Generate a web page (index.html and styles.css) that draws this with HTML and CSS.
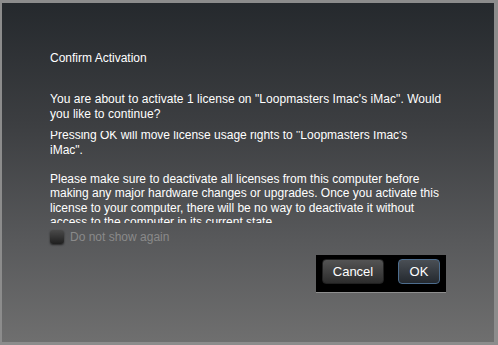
FILE: index.html
```html
<!DOCTYPE html>
<html lang="en">
<head>
    <meta charset="UTF-8">
    <title>Confirm Activation</title>
    <link rel="stylesheet" href="styles.css">
</head>
<body>
    <div class="dialog">
        <h1 class="dialog__title">Confirm Activation</h1>
        <p class="dialog__message">You are about to activate 1 license on "Loopmasters Imac's iMac". Would you like to continue?</p>
        <div class="dialog__details">
            <div class="dialog__details-inner">
                <p>Pressing OK will move license usage rights to "Loopmasters Imac's iMac".</p>
                <p>Please make sure to deactivate all licenses from this computer before making any major hardware changes or upgrades. Once you activate this license to your computer, there will be no way to deactivate it without access to the computer in its current state.</p>
            </div>
        </div>
        <label class="dont-show">
            <span class="dont-show__box"></span>
            <span class="dont-show__label">Do not show again</span>
        </label>
        <div class="button-bar">
            <button class="button button--cancel">Cancel</button>
            <button class="button button--ok">OK</button>
        </div>
    </div>
</body>
</html>
```

FILE: styles.css
```css
html, body {
    margin: 0;
    padding: 0;
}
body {
    background-color: #8c8c8c;
    font-family: "Liberation Sans", Arial, sans-serif;
    font-size: 12px;
    color: #ffffff;
    height: 345px;
    overflow: hidden;
}
.dialog {
    margin: 3px 4px 0 2px;
    height: 339px;
    box-sizing: border-box;
    padding: 0 34px 0 48px;
    background: linear-gradient(to bottom, #25292d 0%, #3c3e41 35%, #58595b 70%, #6f6f6f 100%);
    display: flex;
    flex-direction: column;
}
.dialog__title {
    margin: 47px 0 0 0;
    font-size: 12px;
    font-weight: normal;
    line-height: 16px;
}
.dialog__message {
    margin: 26px 0 0 0;
    line-height: 15px;
    width: 392px;
    letter-spacing: 0.05px;
}
.dialog__details {
    margin-top: 9px;
    height: 92px;
    width: 390px;
    overflow: hidden;
}
.dialog__details-inner {
    margin-top: -3px;
}
.dialog__details-inner p {
    margin: 0 0 14.5px 0;
    line-height: 14.5px;
}
.dont-show {
    display: flex;
    align-items: center;
    gap: 6px;
    margin-top: 6px;
    height: 16px;
}
.dont-show__box {
    width: 14px;
    height: 14px;
    box-sizing: border-box;
    border-radius: 3px;
    background: linear-gradient(to bottom, #4a4a4a, #1f1f1f);
    box-shadow: 0 1px 2px rgba(0, 0, 0, 0.6);
}
.dont-show__label {
    color: #8a8a8a;
}
.button-bar {
    align-self: flex-end;
    margin-right: 14px;
    margin-top: 10px;
    display: flex;
    gap: 14px;
    padding: 4px 6px 8px 6px;
    background-color: #000000;
    border-bottom: 1px solid #8f8f8f;
}
.button {
    height: 25px;
    border-radius: 4px;
    font-family: "Liberation Sans", Arial, sans-serif;
    font-size: 13px;
    color: #ffffff;
    padding: 0;
    cursor: pointer;
}
.button--cancel {
    width: 62px;
    border: 1px solid #202020;
    background: linear-gradient(to bottom, #545454, #2c2c2c);
}
.button--ok {
    width: 42px;
    border: 1px solid #4d6d8e;
    background: linear-gradient(to bottom, #4a4f55, #24292f);
}
```
